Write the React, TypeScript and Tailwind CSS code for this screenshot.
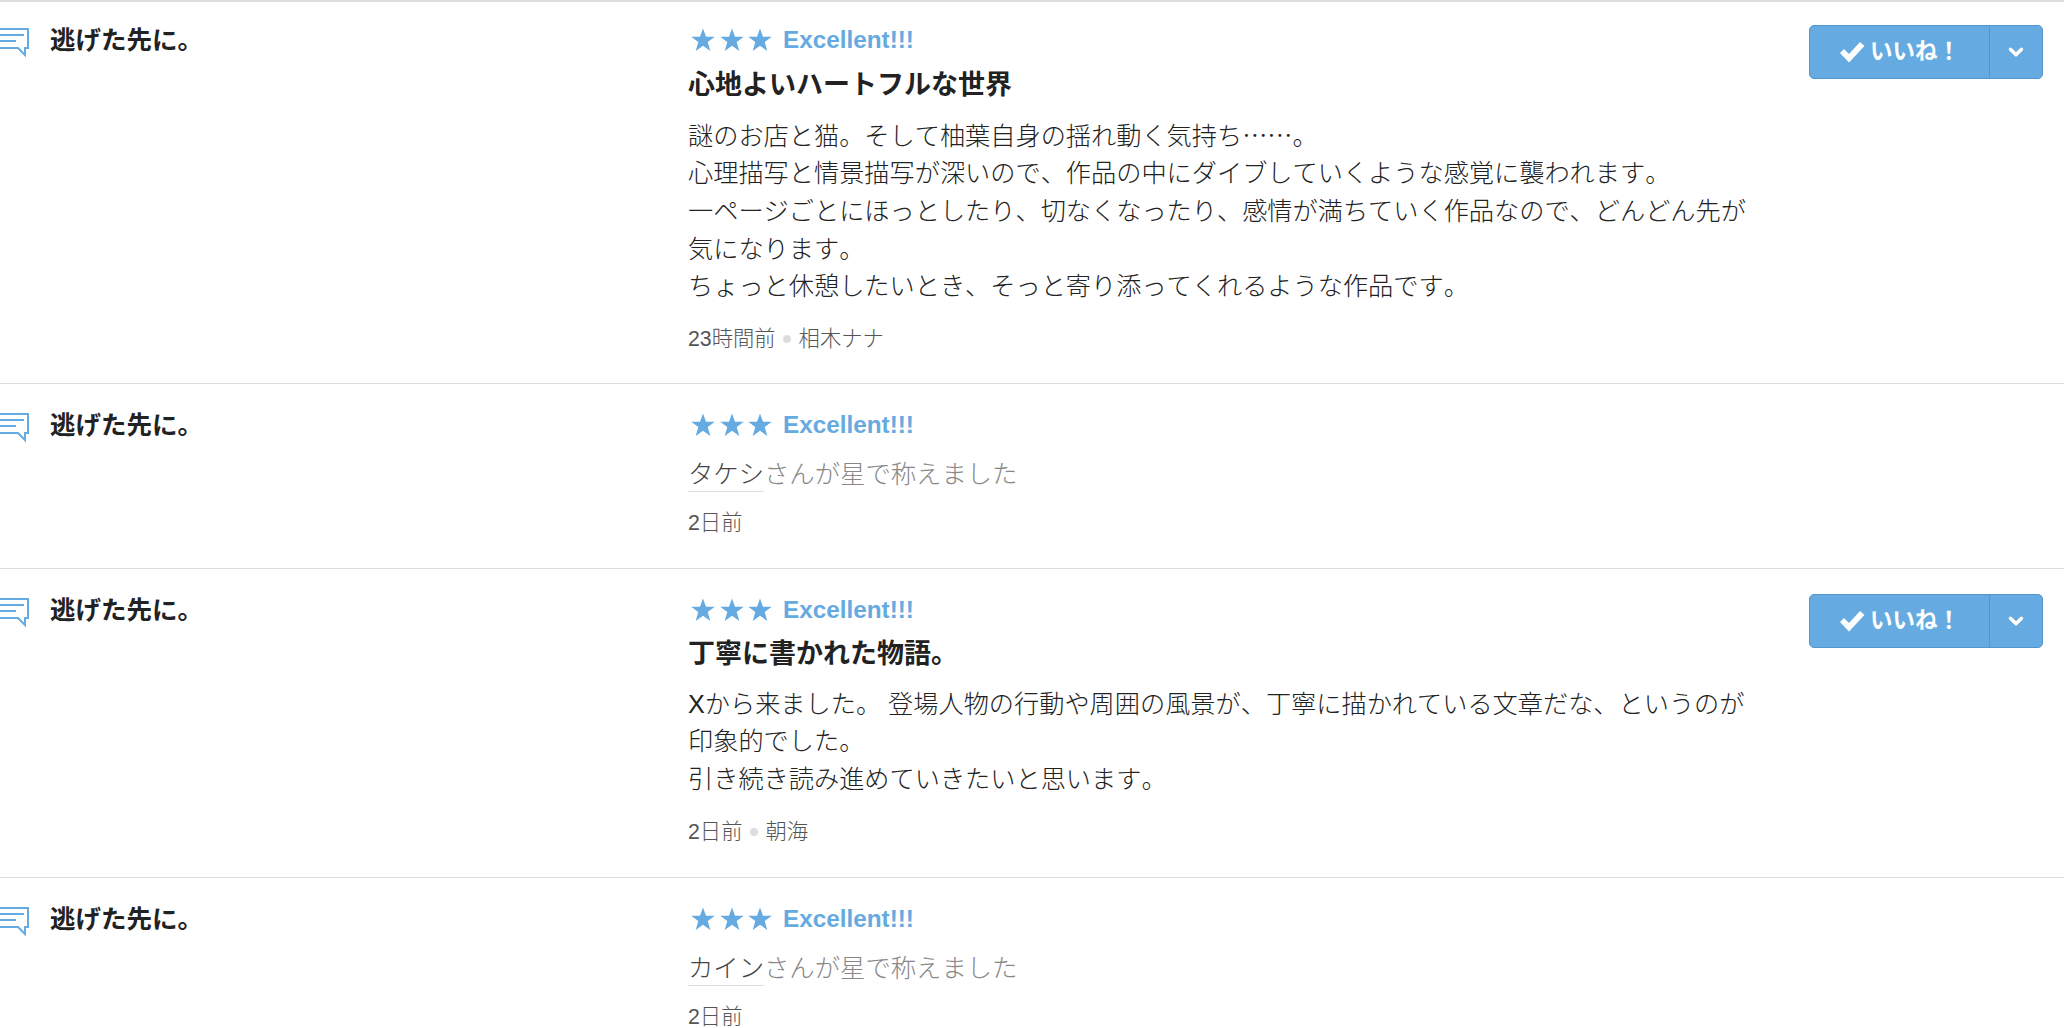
import { ChevronDown } from "lucide-react";

const FONT = "font-['Liberation_Sans','Noto_Sans_CJK_JP',sans-serif]";

const CommentIcon = () => (
  <svg width="30" height="34" viewBox="0 0 30 34" fill="none" stroke="#65aae0" className="-mt-px shrink-0">
    <path d="M-2 5H28V24H25V31L18 24H-2" strokeWidth="2" />
    <path d="M0 11H24M0 17H16" strokeWidth="2" />
  </svg>
);

const Star = () => (
  <svg width="24" height="24" viewBox="0 0 24 24" fill="#65aae0">
    <path d="M12 0.5L15 8.8H23.8L16.7 14.1L19.3 23L12 17.7L4.7 23L7.3 14.1L0.2 8.8H9Z" />
  </svg>
);

const Stars = () => (
  <div className="flex items-center h-[30px] pl-[3px]">
    <div className="flex gap-[4.5px]">
      <Star />
      <Star />
      <Star />
    </div>
    <span className="ml-[11px] text-[#65aae0] text-[24.3px] font-bold leading-none">Excellent!!!</span>
  </div>
);

const LikeButton = () => (
  <div className="flex h-[54px] w-[234px] rounded-[5px] border border-[#5196cf] bg-[#65aae0] text-white">
    <div className="flex flex-1 items-center justify-center gap-[5px] border-r border-[#5196cf] text-[22.5px] font-bold">
      <svg width="26" height="22" viewBox="0 0 26 22" fill="white">
        <path d="M1 12L5 8L10 13L21 1L25.5 5L10 21.5Z" />
      </svg>
      <span>いいね！</span>
    </div>
    <div className="flex w-[52px] items-center justify-center">
      <ChevronDown size={22} strokeWidth={3.8} />
    </div>
  </div>
);

type Row = {
  user?: string;
  title?: string;
  body?: string[];
  time: string;
  author?: string;
  cls: string;
  btnCls?: string;
  titleCls?: string;
};

const rows: Row[] = [
  {
    title: "心地よいハートフルな世界",
    body: [
      "謎のお店と猫。そして柚葉自身の揺れ動く気持ち@@。",
      "心理描写と情景描写が深いので、作品の中にダイブしていくような感覚に襲われます。",
      "一ページごとにほっとしたり、切なくなったり、感情が満ちていく作品なので、どんどん先が気になります。",
      "ちょっと休憩したいとき、そっと寄り添ってくれるような作品です。",
    ],
    time: "23時間前",
    author: "相木ナナ",
    cls: "h-[382px] pt-[23px]",
    btnCls: "mt-0",
    titleCls: "mt-[10px] mb-[10.5px]",
  },
  { user: "タケシ", time: "2日前", cls: "h-[185px] pt-[26px]" },
  {
    title: "丁寧に書かれた物語。",
    body: [
      "Xから来ました。 登場人物の行動や周囲の風景が、丁寧に描かれている文章だな、というのが印象的でした。",
      "引き続き読み進めていきたいと思います。",
    ],
    time: "2日前",
    author: "朝海",
    cls: "h-[309px] pt-[26px]",
    btnCls: "-mt-[1px]",
    titleCls: "mt-[9px] mb-[11.5px]",
  },
  { user: "カイン", time: "2日前", cls: "h-[150px] pt-[26px]" },
];

const BodyLine = ({ line }: { line: string }) => {
  const [head, tail] = line.split("@@");
  if (tail === undefined) return <p>{line}</p>;
  return (
    <p>
      {head}
      <span className="font-['Noto_Sans_CJK_JP',sans-serif]">……</span>
      {tail}
    </p>
  );
};

const ReviewRow = ({ row }: { row: Row }) => (
  <div className={`flex border-b border-[#dddddd] last:border-b-0 ${row.cls}`}>
    <div className="flex w-[688px] shrink-0 items-start">
      <CommentIcon />
      <div className="ml-[20px] text-[25.5px] font-bold leading-[30px] text-[#222222]">逃げた先に。</div>
    </div>
    <div className="w-[1070px] shrink-0">
      <Stars />
      {row.title && (
        <h3 className={`${row.titleCls} text-[27px] font-bold leading-[40px] text-[#222222]`}>{row.title}</h3>
      )}
      {row.body && (
        <div className="text-[25.2px] font-light leading-[37.7px] text-[#222222] [font-kerning:none]">
          {row.body.map((line) => (
            <BodyLine key={line} line={line} />
          ))}
        </div>
      )}
      {row.user && (
        <p className="mt-[16px] text-[25.35px] font-light leading-[37px] text-[#888888]">
          <span className="border-b border-[#dddddd] pb-[3px] text-[#444444]">{row.user}</span>さんが星で称えました
        </p>
      )}
      <p className={`${row.user ? "mt-[15px]" : "mt-[18px]"} flex items-center text-[21.3px] font-light leading-[30px] text-[#555555]`}>
        {row.time}
        {row.author && (
          <>
            <span className="mx-[7.5px] h-[8px] w-[8px] rounded-full bg-[#dddddd]" />
            {row.author}
          </>
        )}
      </p>
    </div>
    {row.title && (
      <div className={`ml-[51px] ${row.btnCls}`}>
        <LikeButton />
      </div>
    )}
  </div>
);

export default function App() {
  return (
    <div className={`${FONT} h-[1028px] w-[2064px] overflow-hidden border-t-2 border-[#dddddd] bg-white`}>
      {rows.map((row, i) => (
        <ReviewRow key={i} row={row} />
      ))}
    </div>
  );
}
